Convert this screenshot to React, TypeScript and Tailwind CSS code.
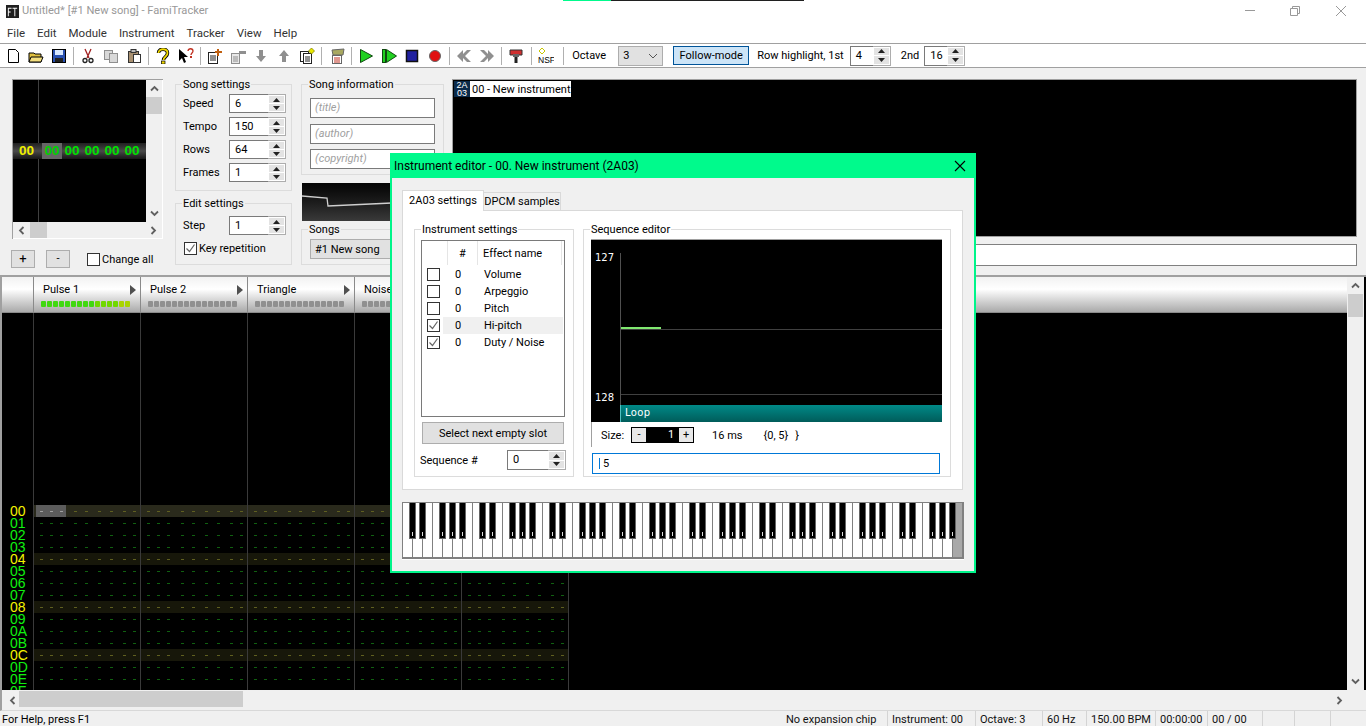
import React from "react";

const font = "font-['Roboto','Liberation_Sans',sans-serif]";

function Ico({ children }: { children: React.ReactNode }) {
  return (
    <svg width={16} height={16} viewBox="0 0 16 16" className="block shrink-0">
      {children}
    </svg>
  );
}

const G = "#8f8f8f";

const toolIcons: (React.ReactNode | "sep")[] = [
  <path d="M3.500 1.500h7l3 3v10h-10z" fill="#fff" stroke="#000" strokeWidth="1" />,
  <g><path d="M1 5h5l1 1h6v8H1z" fill="#e0c040" stroke="#000" /><path d="M3 9h12l-2 5H1z" fill="#f5e080" stroke="#000" /></g>,
  <g><rect x="1.500" y="1.500" width="13" height="13" fill="#2850b0" stroke="#000" /><rect x="4" y="2" width="8" height="5" fill="#d8e8ff" /><rect x="4" y="10" width="8" height="4" fill="#222" /></g>,
  "sep",
  <g fill="none" stroke="#a02020" strokeWidth="1.300"><path d="M5 1l4 9M11 1l-4 9" /><circle cx="5" cy="12.500" r="2" stroke="#222" /><circle cx="11" cy="12.500" r="2" stroke="#222" /></g>,
  <g fill="#d8d8d8" stroke={G}><rect x="1.500" y="2.500" width="8" height="9" /><rect x="6.500" y="5.500" width="8" height="9" /></g>,
  <g><rect x="2.500" y="3.500" width="10" height="11" fill="#a89070" stroke="#333" /><rect x="5" y="1.500" width="5" height="3" fill="#bbb" stroke="#333" /><rect x="7.500" y="6.500" width="7" height="8" fill="#fff" stroke="#333" /></g>,
  "sep",
  <g><path d="M3.500 5C3.500 0 12.500 0 12.500 5c0 4-4 3.500-4 7" fill="none" stroke="#000" strokeWidth="3.500" /><path d="M3.500 5C3.500 0 12.500 0 12.500 5c0 4-4 3.500-4 7" fill="none" stroke="#f0d800" strokeWidth="1.800" /><rect x="6.500" y="13" width="3.500" height="3" fill="#f0d800" stroke="#000" strokeWidth=".7" /></g>,
  <g><path d="M1 1l0 12 3-3 2 5 2-1-2-5h4z" fill="#000" /><path d="M10 3c0-3 5-3 5 0 0 2-2 2-2 4" fill="none" stroke="#c03020" strokeWidth="1.300" /><rect x="12" y="8" width="2" height="2" fill="#c03020" /></g>,
  "sep",
  <g><rect x="1.500" y="4.500" width="9" height="11" fill="#fff" stroke="#222" /><path d="M3 8h6M3 10h6M3 12h6" stroke="#222" /><path d="M11 1v7M8 4h7" stroke="#c06010" strokeWidth="2" /></g>,
  <g><rect x="1.500" y="5.500" width="8" height="10" fill="#e8e8e8" stroke={G} /><path d="M3 9h5M3 11h5M3 13h5" stroke={G} /><rect x="9" y="3" width="7" height="3" fill={G} /></g>,
  <path d="M6 2h4v6h3l-5 6-5-6h3z" fill={G} />,
  <path d="M8 2l5 6h-3v6H6V8H3z" fill={G} />,
  <g><rect x="1.500" y="3.500" width="8" height="10" fill="#fff" stroke="#222" /><rect x="4.500" y="5.500" width="8" height="10" fill="#fff" stroke="#222" /><path d="M6 9h5M6 11h5M6 13h5" stroke="#222" /><path d="M12.500 0l3 3-3 3-3-3z" fill="#e8e800" stroke="#808000" strokeWidth=".8" /></g>,
  "sep",
  <g><path d="M3 2l12-1-1 6H4z" fill="#a8a860" stroke="#666" /><rect x="3.500" y="7.500" width="9" height="8" fill="#fff" stroke="#666" /><path d="M5 10h6M5 12h6M5 14h6" stroke="#c03020" /></g>,
  "sep",
  <path d="M2.500 1.500l12 6.500-12 6.500z" fill="#20d020" stroke="#104810" />,
  <g><rect x="1.500" y="1.500" width="3" height="13" fill="#20d020" stroke="#104810" /><path d="M5.500 1.500l10 6.500-10 6.500z" fill="#20d020" stroke="#104810" /></g>,
  <rect x="2.500" y="2.500" width="11" height="11" fill="#2020a0" stroke="#111" strokeWidth="1.500" />,
  <circle cx="8" cy="8" r="5.500" fill="#e01010" stroke="#666" />,
  "sep",
  <path d="M7 2L1 8l6 6V10l4 4h4L9 8l6-6h-4L7 6z" fill={G} />,
  <path d="M9 2l6 6-6 6v-4l-4 4H1l6-6-6-6h4l4 4z" fill={G} />,
  "sep",
  <g><path d="M2 2h12v5H2z" fill="#d03030" stroke="#333" /><rect x="5" y="6" width="6" height="3" fill="#666" /><rect x="6.500" y="9" width="3" height="6" fill="#222" /></g>,
  "sep",
  <g><path d="M4 0l3 3-3 3-3-3z" fill="#fff" stroke="#c8c800" /><text x="0" y="15" fontSize="8.500" fontFamily="Liberation Sans" fill="#000">NSF</text></g>,
];

function SpinArrows() {
  return (
    <div className="w-[17px] flex flex-col gap-px p-px shrink-0 bg-white self-stretch">
      <div className="flex-1 flex items-center justify-center bg-[#e3e3e3]">
        <svg width="7" height="4" viewBox="0 0 7 4"><path d="M3.500 0L7 4H0z" fill="#222" /></svg>
      </div>
      <div className="flex-1 flex items-center justify-center bg-[#e3e3e3]">
        <svg width="7" height="4" viewBox="0 0 7 4"><path d="M3.500 4L7 0H0z" fill="#222" /></svg>
      </div>
    </div>
  );
}

function Spin({ value, cls }: { value: string; cls: string }) {
  return (
    <div className={`${cls} flex border border-[#adadad] bg-white`}>
      <div className="flex-1 border border-r-0 border-[#7a7a7a] -my-px -ml-px pl-[5px] text-[#000] flex items-center">{value}</div>
      <SpinArrows />
    </div>
  );
}

function Group({ title, cls, inner, children }: { title: string; cls: string; inner?: string; children?: React.ReactNode }) {
  return (
    <fieldset className={`${cls} border border-[#dcdcdc] min-w-0`}>
      <legend className="ml-[6px] px-px leading-[13px] text-[#000]">{title}</legend>
      <div className={inner}>{children}</div>
    </fieldset>
  );
}

function Check({ on }: { on?: boolean }) {
  return (
    <div className="w-[13px] h-[13px] border border-[#333] bg-white shrink-0 flex items-center justify-center">
      {on && (
        <svg width="11" height="11" viewBox="0 0 11 11"><path d="M1.500 5.500L4.500 8.500L9.500 1.500" fill="none" stroke="#666" strokeWidth="1.200" /></svg>
      )}
    </div>
  );
}

function SongRow({ label, value }: { label: string; value: string }) {
  return (
    <div className="flex items-center h-[19px] mb-[4px]">
      <div className="w-[46px]">{label}</div>
      <Spin value={value} cls="w-[57px] h-[19px]" />
    </div>
  );
}

function Arrow({ d }: { d: string }) {
  return (
    <svg width="9" height="9" viewBox="0 0 9 9" className="block relative"><path d={d} fill="none" stroke="#606060" strokeWidth="1.800" /></svg>
  );
}

const UP = "M1 6.500L4.500 3L8 6.500";
const DOWN = "M1 2.500L4.500 6L8 2.500";
const LEFT = "M6.500 1L3 4.500L6.500 8";
const RIGHT = "M2.500 1L6 4.500L2.500 8";

function FrameEditor() {
  return (
    <div className="w-[151px] h-[160px] flex flex-col bg-white border-t border-l border-[#a0a0a0]">
      <div className="flex h-[142px]">
        <div className="w-[133px] bg-black flex flex-col justify-center relative">
          <div className="absolute left-[25px] top-0 bottom-0 w-px bg-[#404040]" />
          <div className="h-[16px] flex items-center bg-gradient-to-b from-[#202020] via-[#4a4a4a] to-[#181818] font-['Liberation_Sans',sans-serif] font-bold text-[13.500px] relative">
            <div className="w-[28px] pl-[6px] text-[#f0f000]">00</div>
            <div className="w-[20px] h-[16px] bg-[#666] text-[#00d000] text-center ml-px leading-[16px]">00</div>
            <div className="w-[20px] text-[#00e000] text-center">00</div>
            <div className="w-[20px] text-[#00e000] text-center">00</div>
            <div className="w-[20px] text-[#00e000] text-center">00</div>
            <div className="w-[20px] text-[#00e000] text-center">00</div>
          </div>
        </div>
        <div className="w-[16px] bg-[#f0f0f0] flex flex-col items-center justify-between py-[4px] relative">
          <Arrow d={UP} />
          <div className="absolute left-0 top-[17px] w-[16px] h-[17px] bg-[#cdcdcd]" />
          <Arrow d={DOWN} />
        </div>
      </div>
      <div className="flex h-[16px] w-[149px] bg-[#f0f0f0] items-center justify-between px-[4px] relative">
        <Arrow d={LEFT} />
        <div className="absolute left-[17px] top-0 w-[17px] h-[16px] bg-[#cdcdcd]" />
        <Arrow d={RIGHT} />
      </div>
    </div>
  );
}

function TopPanel() {
  return (
    <div className="h-[207px] flex pl-[12px] pt-[11px] bg-[#f0f0f0]">
      <div className="w-[163px] shrink-0">
        <FrameEditor />
        <div className="flex items-center mt-[11px] -ml-px">
          <div className="w-[24px] h-[18px] border border-[#adadad] bg-[#e1e1e1] flex items-center justify-center text-[13px]">+</div>
          <div className="w-[24px] h-[18px] ml-[11px] border border-[#adadad] bg-[#e1e1e1] flex items-center justify-center">-</div>
          <div className="ml-[17px]"><Check /></div>
          <div className="ml-[2px] pt-px whitespace-nowrap">Change all</div>
        </div>
      </div>
      <div className="w-[117px] shrink-0 -mt-px">
        <Group title="Song settings" cls="h-[113px]" inner="pl-[7px] pt-[3px]">
          <SongRow label="Speed" value="6" />
          <SongRow label="Tempo" value="150" />
          <SongRow label="Rows" value="64" />
          <SongRow label="Frames" value="1" />
        </Group>
        <Group title="Edit settings" cls="h-[68px] mt-[6px]" inner="pl-[7px] pt-[6px]">
          <SongRow label="Step" value="1" />
          <div className="flex items-center h-[18px] gap-[2px] pl-px">
            <Check on />
            <span className="pt-px">Key repetition</span>
          </div>
        </Group>
      </div>
      <div className="w-[143px] ml-[9px] shrink-0 -mt-px">
        <Group title="Song information" cls="h-[97px]" inner="pl-[8px] pt-[7px]">
          {["(title)", "(author)", "(copyright)"].map((t) => (
            <div key={t} className="h-[20px] mb-[5.500px] w-[125px] border border-[#7a7a7a] bg-white pl-[4px] italic text-[#a0a0a0] leading-[18px]">{t}</div>
          ))}
        </Group>
        <div className="h-[38px] w-[142px] ml-px mt-[8px] bg-gradient-to-b from-[#050505] via-[#1c1c1c] to-[#3a3a3a]">
          <svg width="90" height="38" viewBox="0 0 90 38" className="block">
            <path d="M0 13L25 15L26 23L90 20" fill="none" stroke="#cfcfcf" strokeWidth="1.300" />
          </svg>
        </div>
        <Group title="Songs" cls="h-[42px] mt-[1.500px]" inner="pl-[8px] pt-[3px]">
          <div className="h-[20px] w-[125px] border border-[#adadad] bg-[#e1e1e1] pl-[4px] leading-[19px]">#1 New song</div>
        </Group>
      </div>
      <div className="flex-1 ml-[8px] min-w-0 mr-[9px]">
        <div className="h-[158px] bg-black border border-[#a0a0a0] pt-px pl-px">
          <div className="flex h-[16px] w-[117px]">
            <div className="w-[16px] bg-[#0a2a4a] text-white text-[9px] leading-[8px] text-center font-['Liberation_Sans',sans-serif]">2A<br />03</div>
            <div className="flex-1 bg-white text-black pl-[2px] pt-[2px] leading-[14px] whitespace-nowrap">00 - New instrument</div>
          </div>
        </div>
        <div className="h-[22px] mt-[7px] bg-white border border-[#808080]" />
      </div>
    </div>
  );
}

const dashX = ["ml-[6px]", "ml-[7px]", "ml-[7px]", "ml-[11px]", "ml-[8px]", "ml-[10px]", "ml-[9px]", "ml-[10px]", "ml-[7px]"];

const ROWS = ["00", "01", "02", "03", "04", "05", "06", "07", "08", "09", "0A", "0B", "0C", "0D", "0E", "0F"];

function Channel({ c }: { c: number }) {
  return (
    <div className="w-[107px] shrink-0 border-r border-[#3a3a3a] pt-[192px]">
      {ROWS.map((_, i) => {
        const hi = i % 4 === 0;
        const first = i === 0;
        return (
          <div key={i} className={`h-[12px] flex items-center relative ${first ? "bg-[#2a2a1c]" : hi ? "bg-[#17170a]" : ""}`}>
            {first && c === 0 && <div className="absolute left-[2px] top-0 w-[30px] h-[12px] bg-[#5c5c5c]" />}
            {dashX.map((m, k) => (
              <div key={k} className={`${m} w-[3px] h-px relative ${first && k < 3 && c === 0 ? "bg-[#a0a0a0]" : hi ? "bg-[#5f5f20]" : "bg-[#106010]"}`} />
            ))}
          </div>
        );
      })}
    </div>
  );
}

function ChanHead({ name, on }: { name: string; on?: boolean }) {
  return (
    <div className="w-[107px] shrink-0 border-r border-[#8a8a8a] flex flex-col pl-[7px] pr-[3px] pt-[5px]">
      <div className="flex justify-between items-center h-[16px]">
        <span className="pl-[2px]">{name}</span>
        <svg width="7" height="10" viewBox="0 0 7 10" className="block"><path d="M0 0l6 5L0 10z" fill="#505050" /></svg>
      </div>
      <div className="flex mt-[3px] h-[6px]">
        {Array.from({ length: 15 }).map((_, i) => (
          <div key={i} className={`w-[5px] h-[6px] mr-px shrink-0 rounded-[1px] ${on ? (i > 12 ? "bg-[#a8d400]" : i > 8 ? "bg-[#70d800]" : "bg-[#40d810]") : "bg-[#909090]"}`} />
        ))}
      </div>
    </div>
  );
}

function PatternEditor() {
  return (
    <div className="h-[415px] flex border-t-2 border-t-[#a0a0a0] bg-black border-l-2 border-l-[#a0a0a0] overflow-hidden">
      <div className="flex-1 flex flex-col min-w-0">
        <div className="h-[36px] shrink-0 flex bg-gradient-to-b from-[#f2f2f2] via-white via-[35%] to-[#aaaaaa] border-b border-[#8a8a8a] text-black">
          <div className="w-[32px] shrink-0 border-r border-[#8a8a8a]" />
          <ChanHead name="Pulse 1" on />
          <ChanHead name="Pulse 2" />
          <ChanHead name="Triangle" />
          <ChanHead name="Noise" />
        </div>
        <div className="flex-1 flex overflow-hidden">
          <div className="w-[32px] shrink-0 border-r border-[#3a3a3a] pt-[192px]">
            {ROWS.map((r, i) => (
              <div key={r} className={`h-[12px] leading-[12px] pl-[8px] font-['Liberation_Sans',sans-serif] text-[14px] ${i % 4 === 0 ? "text-[#f4f400]" : "text-[#10f010]"}`}>{r}</div>
            ))}
          </div>
          {[0, 1, 2, 3, 4].map((c) => (
            <Channel key={c} c={c} />
          ))}
        </div>
      </div>
      <div className="w-[17px] mr-[2px] bg-[#f0f0f0] shrink-0 flex flex-col items-center py-[4px] relative justify-between">
        <Arrow d={UP} />
        <div className="absolute left-[1px] top-[17px] w-[15px] h-[23px] bg-[#cdcdcd]" />
        <Arrow d={DOWN} />
      </div>
    </div>
  );
}

function Piano() {
  const whites = Array.from({ length: 56 }, (_, i) => i);
  const blacks: number[] = [];
  for (let o = 0; o < 8; o++) {
    for (const k of [0, 1, 3, 4, 5]) blacks.push(o * 7 + k);
  }
  return (
    <svg width="562" height="58" viewBox="0 0 562 58" className="block" shapeRendering="crispEdges">
      <rect x="0" y="0" width="562" height="57" fill="#808080" />
      {whites.map((i) => (
        <rect key={i} x={1 + i * 10} y="1" width="9" height="54" fill={i === 55 ? "#a8a8a8" : "#fff"} />
      ))}
      <rect x="0" y="57" width="562" height="1" fill="#fff" />
      {blacks.map((b) => (
        <g key={b}>
          <rect x={7 + b * 10} y="1" width="7" height="36" fill="#666" />
          <rect x={8 + b * 10} y="1" width="5" height="35" fill="#000" />
          <rect x={10 + b * 10} y="30" width="1" height="4" fill="#ddd" />
        </g>
      ))}
    </svg>
  );
}

function Dialog() {
  const items: [string, boolean][] = [
    ["Volume", false],
    ["Arpeggio", false],
    ["Pitch", false],
    ["Hi-pitch", true],
    ["Duty / Noise", true],
  ];
  return (
    <div className="absolute left-[390px] top-[153px] w-[586px] h-[420px] bg-[#f0f0f0] border-2 border-t-0 border-[#00f58a] flex flex-col">
      <div className="h-[25px] -mx-[2px] bg-[#00fa8c] flex items-center justify-between pl-[4px] pr-[10px] text-[12px] shrink-0">
        <span>Instrument editor - 00. New instrument (2A03)</span>
        <svg width="12" height="12" viewBox="0 0 12 12" className="block"><path d="M1 1l10 10M11 1L1 11" stroke="#000" strokeWidth="1.100" fill="none" /></svg>
      </div>
      <div className="pl-[10px] pt-[12px]">
        <div className="flex items-end h-[20px]">
          <div className="h-[21px] w-[82px] bg-white border border-b-0 border-[#d9d9d9] flex items-center justify-center relative z-10 -mb-px">2A03 settings</div>
          <div className="h-[18px] w-[77px] border border-b-0 border-l-0 border-[#d9d9d9] bg-[#f0f0f0] flex items-center justify-center whitespace-nowrap">DPCM samples</div>
        </div>
        <div className="w-[561px] h-[280px] bg-white border border-[#d9d9d9] flex pl-[11px] pt-[12px] gap-[9px]">
          <Group title="Instrument settings" cls="w-[160px] h-[254px] shrink-0" inner="pl-[6px] pt-[4px]">
            <div className="w-[144px] h-[177px] border border-[#7a7a7a] bg-white">
              <div className="flex h-[24px] items-center">
                <div className="w-[26px] h-[24px] border-r border-[#e5e5e5]" />
                <div className="w-[30px] h-[24px] pt-[2px] border-r border-[#e5e5e5] flex items-center justify-center">#</div>
                <div className="w-[84px] h-[24px] pt-[2px] border-r border-[#e5e5e5] flex items-center pl-[5px]">Effect name</div>
              </div>
              <div className="mt-[1px]">
                {items.map(([n, c], i) => (
                  <div key={n} className="h-[17px] flex items-center pl-[5px]">
                    <Check on={c} />
                    <div className={`flex h-[17px] pt-px items-center ml-[3px] w-[120px] ${i === 3 ? "bg-[#f0f0f0]" : ""}`}>
                      <div className="w-[30px] pl-[12px]">0</div>
                      <div className="pl-[11px]">{n}</div>
                    </div>
                  </div>
                ))}
              </div>
            </div>
            <div className="w-[142px] h-[22px] ml-px mt-[5px] pt-px border border-[#adadad] bg-[#e1e1e1] flex items-center justify-center">Select next empty slot</div>
            <div className="flex items-center mt-[6px] h-[20px] -ml-px">
              <div className="w-[87px] pt-[2px]">Sequence #</div>
              <Spin value="0" cls="w-[59px] h-[20px]" />
            </div>
          </Group>
          <Group title="Sequence editor" cls="w-[368px] h-[254px] shrink-0" inner="pl-[7px] pt-[3px]">
            <div className="w-[351px] h-[183px] bg-black border-t border-[#a0a0a0] flex">
              <div className="w-[29px] shrink-0 flex flex-col pt-[13px] pl-[4px] text-white font-['DejaVu_Sans',sans-serif] text-[10px] leading-[10px]">
                <div>127</div>
                <div className="mt-[130px]">128</div>
              </div>
              <div className="flex-1 flex flex-col">
                <div className="h-[152px] border-l border-[#505050] mt-[13px]">
                  <div className="h-px bg-[#404040] mt-[76px] relative">
                    <div className="absolute left-0 -top-[2px] w-[40px] h-[2px] bg-[#80e870]" />
                  </div>
                  <div className="h-px bg-[#404040] mt-[64px]" />
                </div>
                <div className="h-[17px] bg-gradient-to-b from-[#008a88] to-[#005c5a] border-l border-[#50c0c0] text-white font-['DejaVu_Sans',sans-serif] text-[10px] pl-[4px] leading-[15px] tracking-[0.400px]">Loop</div>
              </div>
            </div>
            <div className="h-[25px] pt-[5px] flex items-start pl-[9px] border-l border-[#a0a0a0]">
              <span className="leading-[18px]">Size:</span>
              <div className="ml-[7px] w-[63px] h-[16px] bg-black border border-black flex items-center">
                <div className="w-[14px] h-[14px] bg-[#e8e8e8] flex items-center justify-center">-</div>
                <div className="flex-1 text-right pr-[5px] text-white leading-[14px]">1</div>
                <div className="w-[14px] h-[14px] bg-[#e8e8e8] flex items-center justify-center">+</div>
              </div>
              <span className="ml-[18px] leading-[18px]">16 ms</span>
              <span className="ml-[21px] leading-[18px]">{"{0, 5}"}</span>
              <span className="ml-[7px] leading-[18px]">{"}"}</span>
            </div>
            <div className="w-[348px] h-[21px] ml-px mt-[6px] border border-[#0078d7] bg-white flex items-center pl-[6px]">
              <div className="w-px h-[11px] bg-[#0078d7] mr-[3px]" />
              5
            </div>
          </Group>
        </div>
        <div className="mt-[12px]"><Piano /></div>
      </div>
    </div>
  );
}

const statusCells: [string, string][] = [
  ["No expansion chip", "w-[106px]"],
  ["Instrument: 00", "w-[88px]"],
  ["Octave: 3", "w-[67px]"],
  ["60 Hz", "w-[44px]"],
  ["150.00 BPM", "w-[69px]"],
  ["00:00:00", "w-[52px]"],
  ["00 / 00", "w-[55px]"],
  ["", "w-[32px]"],
  ["", "w-[36px]"],
];

export default function App() {
  return (
    <div className={`${font} relative w-[1366px] h-[726px] overflow-hidden bg-[#f0f0f0] text-[11px] leading-[14px] text-black`}>
      <div className="h-[22px] bg-white flex items-center relative">
        <div className="w-[22px] flex justify-center pl-[2px] pt-[1px]">
          <svg width="13" height="13" viewBox="0 0 14 14" className="block">
            <rect width="14" height="14" fill="#202020" />
            <path d="M2 3h4v1H3v3h2v1H3v4H2zM7 3h5v1h-2v8H9V4H7z" fill="#fff" />
          </svg>
        </div>
        <div className="text-[#999] text-[11.100px]">Untitled* [#1 New song] - FamiTracker</div>
        <div className="flex-1" />
        <svg width="12" height="12" viewBox="0 0 12 12" className="block mr-[33px]"><path d="M1 5.500h10" stroke="#999" /></svg>
        <svg width="12" height="12" viewBox="0 0 12 12" className="block mr-[34px]"><path d="M1.500 3.500h7v7h-7zM3.500 3.500v-2h7v7h-2" fill="none" stroke="#999" /></svg>
        <svg width="12" height="12" viewBox="0 0 12 12" className="block mr-[19px]"><path d="M1 1l10 10M11 1L1 11" stroke="#999" /></svg>
        <div className="absolute left-[563px] top-0 h-px w-[241px] flex">
          <div className="w-[48px] bg-[#00fa8c]" />
          <div className="flex-1 bg-[#202020]" />
        </div>
      </div>
      <div className="h-[21px] bg-white flex items-center pl-[7px] gap-[12px] text-[#333] text-[11.500px]">
        {["File", "Edit", "Module", "Instrument", "Tracker", "View", "Help"].map((m) => (
          <span key={m}>{m}</span>
        ))}
      </div>
      <div className="h-[25px] bg-white border-y border-[#a0a0a0] flex items-center pl-[1px]">
        {toolIcons.map((t, i) =>
          t === "sep" ? (
            <div key={i} className="w-px h-[18px] bg-[#b0b0b0] mx-[2.650px] shrink-0" />
          ) : (
            <div key={i} className="w-[23px] flex justify-center shrink-0"><Ico>{t}</Ico></div>
          )
        )}
        <div className="w-px h-[18px] bg-[#b0b0b0] ml-[6px] shrink-0" />
        <span className="ml-[8px]">Octave</span>
        <div className="ml-[12px] w-[45px] h-[20px] bg-[#e1e1e1] border border-[#adadad] flex items-center justify-between pl-[4px] pr-[4px]">
          3
          <svg width="10" height="6" viewBox="0 0 10 6" className="block"><path d="M1 1l4 4 4-4" fill="none" stroke="#555" /></svg>
        </div>
        <div className="ml-[10px] w-[76px] h-[19px] bg-[#cce4f7] border border-[#005499] flex items-center justify-center">Follow-mode</div>
        <span className="ml-[8px] whitespace-nowrap">Row highlight, 1st</span>
        <Spin value="4" cls="ml-[6px] w-[41px] h-[20px]" />
        <span className="ml-[10px]">2nd</span>
        <Spin value="16" cls="ml-[5px] w-[41px] h-[20px]" />
      </div>
      <TopPanel />
      <PatternEditor />
      <div className="h-[21px] bg-[#f0f0f0] flex items-center justify-between border-l-2 border-l-[#a0a0a0] pl-[6px] pr-[22px] relative border-b border-b-[#d8d8d8]">
        <Arrow d={LEFT} />
        <div className="absolute left-[17px] top-[1px] w-[224px] h-[16px] bg-[#cdcdcd]" />
        <Arrow d={RIGHT} />
      </div>
      <div className="h-[15px] flex pl-[2px] bg-[#f0f0f0]">
        <div className="flex-1 pt-[2px]">For Help, press F1</div>
        {statusCells.map(([t, w], i) => (
          <div key={i} className={`${w} h-[15px] pl-[4px] pt-[2px] border-r border-[#d4d4d4] whitespace-nowrap text-[#111] shrink-0`}>{t}</div>
        ))}
        <div className="w-[35px] shrink-0" />
      </div>
      <Dialog />
    </div>
  );
}
